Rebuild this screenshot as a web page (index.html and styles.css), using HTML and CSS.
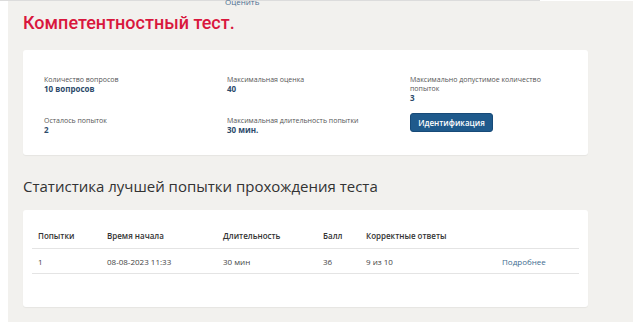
FILE: index.html
```html
<!DOCTYPE html>
<html lang="ru">
<head>
  <meta charset="UTF-8" />
  <meta name="viewport" content="width=device-width, initial-scale=1.0" />
  <title>Компетентностный тест</title>
  <link rel="stylesheet" href="styles.css">
</head>
<body>
  <div class="topline"></div>
  <div class="page">
    <div class="rate"><a href="#">Оценить</a></div>
    <h1 class="title">Компетентностный тест.</h1>

    <div class="card info">
      <div class="info-item">
        <span class="label">Количество вопросов</span>
        <span class="value">10 вопросов</span>
      </div>
      <div class="info-item">
        <span class="label">Максимальная оценка</span>
        <span class="value">40</span>
      </div>
      <div class="info-item">
        <span class="label">Максимально допустимое количество попыток</span>
        <span class="value">3</span>
      </div>
      <div class="info-item">
        <span class="label">Осталось попыток</span>
        <span class="value">2</span>
      </div>
      <div class="info-item">
        <span class="label">Максимальная длительность попытки</span>
        <span class="value">30 мин.</span>
      </div>
      <div class="info-item">
        <button class="btn">Идентификация</button>
      </div>
    </div>

    <h2 class="subtitle">Статистика лучшей попытки прохождения теста</h2>

    <div class="card stats">
      <table>
        <thead>
          <tr>
            <th class="col-num">Попытки</th>
            <th class="col-start">Время начала</th>
            <th class="col-dur">Длительность</th>
            <th class="col-score">Балл</th>
            <th class="col-correct">Корректные ответы</th>
            <th></th>
          </tr>
        </thead>
        <tbody>
          <tr>
            <td>1</td>
            <td>08-08-2023 11:33</td>
            <td>30 мин</td>
            <td>36</td>
            <td>9 из 10</td>
            <td><a href="#">Подробнее</a></td>
          </tr>
        </tbody>
      </table>
    </div>
  </div>
</body>
</html>
```

FILE: styles.css
```css
body {
  margin: 0;
  background-color: #fff;
  font-family: "Open Sans", sans-serif;
  color: #333;
}

a {
  text-decoration: none;
}

.topline {
  width: 540px;
  height: 1px;
  background-color: #dcdcdc;
}

.page {
  display: flow-root;
  margin: 0 10px 0 8px;
  padding: 0 45px 15px 15px;
  background-color: #f2f1ee;
}

.rate {
  height: 5px;
  margin-top: -3px;
  padding-left: 202px;
  font-size: 8px;
  line-height: 8px;
}

.rate a {
  color: #4d6f91;
}

.title {
  margin: 9px 0 16px;
  font-family: Roboto, sans-serif;
  font-weight: 500;
  font-size: 18px;
  line-height: 22px;
  color: #d9173d;
}

.card {
  background-color: #fff;
  border-radius: 3px;
  box-shadow: 0 1px 1px rgba(0, 0, 0, 0.05);
}

.info {
  display: grid;
  grid-template-columns: 183px 183px 1fr;
  row-gap: 12px;
  padding: 25px 20px 19px 21px;
  height: 61px;
  align-items: start;
}

.info-item {
  display: flex;
  flex-direction: column;
}

.label {
  font-size: 7px;
  line-height: 9px;
  color: #555;
  max-width: 140px;
}

.value {
  font-size: 8px;
  line-height: 10px;
  font-weight: 700;
  color: #2d4a6b;
}

.btn {
  width: 83px;
  height: 19px;
  margin-top: -3px;
  padding: 0;
  border: 1px solid #174a78;
  border-radius: 3px;
  background-color: #1f5a8c;
  color: #fff;
  font-family: "Open Sans", sans-serif;
  font-size: 8px;
  font-weight: 600;
  cursor: pointer;
}

.subtitle {
  margin: 21px 0 14px;
  font-family: "Open Sans", sans-serif;
  font-weight: 400;
  font-size: 15px;
  line-height: 20px;
  color: #333;
}

.stats {
  padding: 16px 9px 33px;
}

table {
  width: 100%;
  border-collapse: collapse;
  font-size: 8px;
}

th {
  text-align: left;
  font-weight: 600;
  color: #333;
  padding: 4px 6px 7px;
  border-bottom: 1px solid #e4e4e4;
}

td {
  padding: 7px 6px 6px;
  color: #444;
  border-bottom: 1px solid #e4e4e4;
}

td a {
  color: #3e6b90;
}

.col-num {
  width: 57px;
}

.col-start {
  width: 104px;
}

.col-dur {
  width: 88px;
}

.col-score {
  width: 31px;
}

.col-correct {
  width: 124px;
}
```
